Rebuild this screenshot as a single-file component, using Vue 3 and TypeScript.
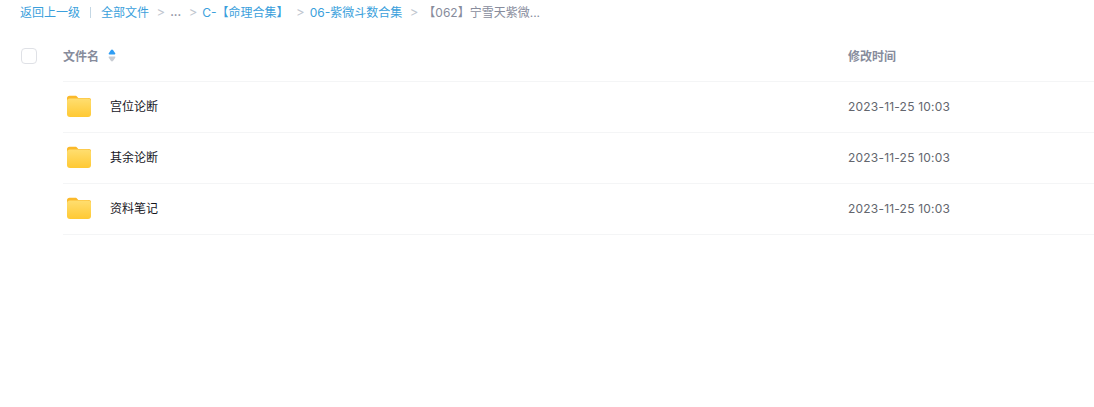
<script setup lang="ts">
const crumbs = [
  { label: '全部文件' },
  { label: '...', muted: true },
  { label: 'C-【命理合集】' },
  { label: '06-紫微斗数合集' },
  { label: '【062】宁雪天紫微...', current: true },
]

const rows = [
  { name: '宫位论断', time: '2023-11-25 10:03' },
  { name: '其余论断', time: '2023-11-25 10:03' },
  { name: '资料笔记', time: '2023-11-25 10:03' },
]
</script>

<template>
  <div class="page">
    <nav class="crumbs">
      <a class="link">返回上一级</a>
      <span class="bar"></span>
      <template v-for="(c, i) in crumbs" :key="c.label">
        <span v-if="i > 0" class="sep">&gt;</span>
        <span :class="c.current ? 'current' : c.muted ? 'more' : 'link'">{{ c.label }}</span>
      </template>
    </nav>

    <div class="head">
      <span class="check"></span>
      <div class="head-name">
        <span>文件名</span>
        <svg class="sort" width="8" height="13" viewBox="0 0 8 13">
          <path d="M4 .4c.4 0 .7.2 1 .5l2.2 3.4c.4.6.1 1.2-.6 1.2H1.400c-.7 0-1-.6-.6-1.200L3 .9c.3-.3.6-.5 1-.5z" fill="#2f9df4" />
          <path d="M4 12.600c.4 0 .7-.2 1-.5l2.200-3.400c.4-.6.1-1.200-.6-1.200H1.400c-.7 0-1 .6-.6 1.200L3 12.100c.3.3.6.5 1 .5z" fill="#c8ccd3" />
        </svg>
      </div>
      <div class="head-time">修改时间</div>
    </div>

    <div v-for="r in rows" :key="r.name" class="row">
      <svg class="folder" width="26" height="24" viewBox="0 0 26 24">
        <defs>
          <linearGradient id="fold" x1="0" y1="0" x2="0" y2="1">
            <stop offset="0" stop-color="#ffde70" />
            <stop offset="1" stop-color="#ffc933" />
          </linearGradient>
        </defs>
        <path d="M1 4.500C1 2.800 2 1.800 3.600 1.800h5.600c1 0 1.600.4 2.200 1.100l.9 1.100h10.600c1.400 0 2.100.8 2.100 2.200V8H1z" fill="#fbb92a" />
        <rect x="1" y="4.400" width="24" height="18.600" rx="3" fill="url(#fold)" />
      </svg>
      <span class="name">{{ r.name }}</span>
      <span class="time">{{ r.time }}</span>
    </div>
  </div>
</template>

<style>
html,
body {
  margin: 0;
  background: #fff;
}
</style>

<style scoped>
.page {
  width: 1094px;
  height: 407px;
  overflow: hidden;
  font-family: Inter, "Noto Sans CJK SC", sans-serif;
  font-size: 12px;
}

.crumbs {
  display: flex;
  align-items: center;
  height: 23px;
  padding-left: 20px;
  white-space: nowrap;
}

.link {
  color: #3b9fdc;
}

.bar {
  width: 1px;
  height: 11px;
  margin: 1px 10px 0;
  background: #c4d7e4;
}

.sep {
  margin: 0 5px 0 7.5px;
  color: #c0c6cf;
  font-size: 13px;
}

.more {
  color: #878c9c;
  font-size: 11px;
  font-weight: 700;
}

.current {
  color: #878c9c;
}

.head {
  display: flex;
  align-items: center;
  box-sizing: border-box;
  height: 58px;
  padding-top: 6px;
  margin-left: 21px;
}

.check {
  box-sizing: border-box;
  width: 16px;
  height: 16px;
  margin-top: 2px;
  border: 1px solid #dfe1e6;
  border-radius: 4px;
}

.head-name {
  display: flex;
  align-items: center;
  flex: 1;
  margin-left: 26px;
  font-weight: 700;
  color: #878c9c;
}

.sort {
  margin-left: 9px;
}

.head-time {
  width: 246px;
  font-weight: 700;
  color: #878c9c;
}

.row {
  display: flex;
  align-items: center;
  height: 51px;
  margin-left: 63px;
  padding-bottom: 2px;
  border-top: 1px solid #f4f5f6;
  box-sizing: border-box;
}

.row:last-child {
  height: 52px;
  border-bottom: 1px solid #f4f5f6;
}

.folder {
  margin-left: 3px;
  flex: none;
}

.name {
  flex: 1;
  margin-left: 18px;
  margin-bottom: 2px;
  color: #16161d;
}

.time {
  width: 246px;
  color: #63666e;
  letter-spacing: 0.2px;
}
</style>
